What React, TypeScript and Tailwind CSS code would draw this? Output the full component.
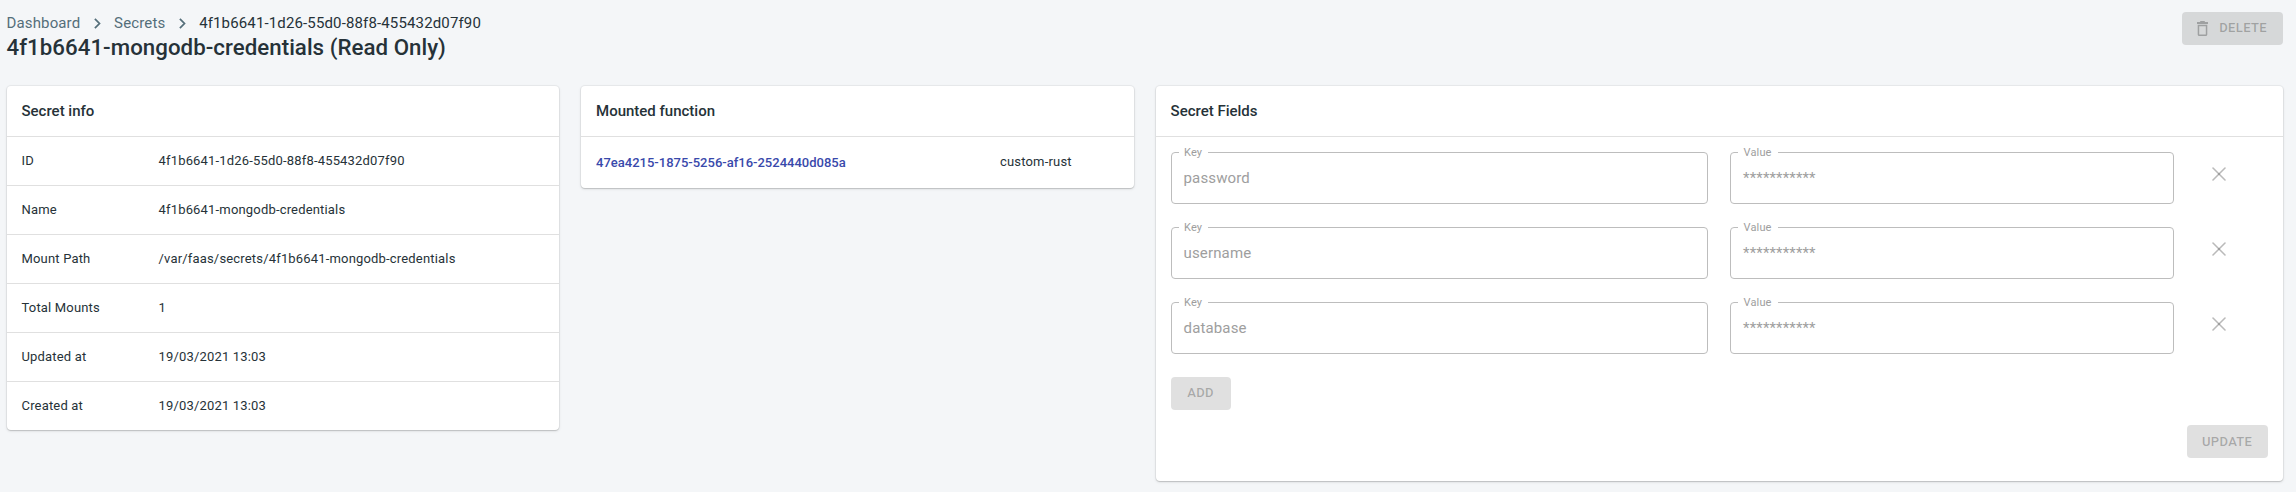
import type { ReactNode } from 'react';

const info = [
  ['ID', '4f1b6641-1d26-55d0-88f8-455432d07f90'],
  ['Name', '4f1b6641-mongodb-credentials'],
  ['Mount Path', '/var/faas/secrets/4f1b6641-mongodb-credentials'],
  ['Total Mounts', '1'],
  ['Updated at', '19/03/2021 13:03'],
  ['Created at', '19/03/2021 13:03'],
];

const fields = ['password', 'username', 'database'];

function Card({ title, className = '', children }: { title: string; className?: string; children: ReactNode }) {
  return (
    <section
      className={`rounded-[4px] bg-white shadow-[0_0_0_1px_rgba(63,63,68,0.05),0_1px_3px_0_rgba(63,63,68,0.15),0_1px_1px_0_rgba(0,0,0,0.12)] ${className}`}
    >
      <h2 className="h-[50px] pl-[15px] text-[15px] leading-[50px] font-medium">{title}</h2>
      {children}
    </section>
  );
}

function Separator() {
  return (
    <svg className="mx-[7.4px] size-[19px]" viewBox="0 0 24 24" fill="none" stroke="#546e7a" strokeWidth="2.2">
      <path d="M8.7 6.2 14.5 12l-5.8 5.8" />
    </svg>
  );
}

function Field({ label, value }: { label: string; value: string }) {
  return (
    <fieldset className="h-[57px] min-w-0 rounded-[4px] border border-[#bdbdbd] pl-[7px]">
      <legend className="h-[11px] pr-[6px] pl-[5.5px] text-[11px] leading-[11px] tracking-[0.14px] text-[#9e9e9e]">{label}</legend>
      <div className="pt-[11px] pl-[5px] text-[15px] leading-[18px] tracking-[0.14px] text-[#9e9e9e]">{value}</div>
    </fieldset>
  );
}

function CloseIcon() {
  return (
    <svg className="ml-[16px] mt-[20px] size-[14px]" viewBox="0 0 14 14" fill="none" stroke="#000" strokeOpacity="0.27" strokeWidth="1.6" strokeLinecap="round">
      <path d="M1 1l12 12" />
      <path d="M13 1 1 13" />
    </svg>
  );
}

const button =
  'flex h-[33px] items-center justify-center rounded-[4px] bg-black/12 text-[13px] font-medium tracking-[0.37px] text-black/26';

export default function App() {
  return (
    <main
      className="h-[492px] bg-[#f4f6f8] pt-[12px] pr-[13.4px] pl-[6.5px] text-[#263238]"
      style={{ fontFamily: 'Roboto, "Liberation Sans", sans-serif' }}
    >
      <header className="flex h-[74px] items-start justify-between">
        <div>
          <nav className="flex h-[22px] items-center text-[15px] leading-[22px] tracking-[0.14px] text-[#546e7a]">
            <span>Dashboard</span>
            <Separator />
            <span>Secrets</span>
            <Separator />
            <span className="text-[#263238]">4f1b6641-1d26-55d0-88f8-455432d07f90</span>
          </nav>
          <h1 className="text-[22.286px] leading-[27px] font-medium tracking-[0.04px]">4f1b6641-mongodb-credentials (Read Only)</h1>
        </div>
        <button className={`${button} w-[101px] pb-[1px]`}>
          <svg className="mr-[11px] h-[15px] w-[11px]" viewBox="0 0 11 15" fill="currentColor">
            <path fillRule="evenodd" d="M3.2 0h4.600v1H11v2H0V1h3.200zM.7 3.700h9.600v9.800c0 .8-.7 1.500-1.500 1.500H2.200c-.8 0-1.500-.7-1.500-1.500zM2.200 5.200v8.300h6.600V5.200z" />
          </svg>
          DELETE
        </button>
      </header>

      <div className="grid grid-cols-4 items-start gap-[22px]">
        <Card title="Secret info">
          <dl className="text-[13px] tracking-[0.175px]">
            {info.map(([name, value]) => (
              <div key={name} className="flex h-[49px] border-t border-[#e0e0e0] pl-[15px] leading-[48px]">
                <dt className="w-[137px]">{name}</dt>
                <dd>{value}</dd>
              </div>
            ))}
          </dl>
        </Card>

        <Card title="Mounted function">
          <div className="flex h-[52px] border-t border-[#e0e0e0] pl-[15px] text-[13px]">
            <a className="w-[404px] leading-[52px] font-medium text-[#3949ab]">47ea4215-1875-5256-af16-2524440d085a</a>
            <span className="leading-[50px] tracking-[0.175px]">custom-rust</span>
          </div>
        </Card>

        <Card title="Secret Fields" className="col-span-2 h-[395px]">
          <div className="border-t border-[#e0e0e0] px-[15px] pt-[10px]">
            <div className="flex flex-col gap-[18px]">
              {fields.map((name) => (
                <div key={name} className="grid h-[57px] grid-cols-12 gap-x-[22px]">
                  <div className="col-span-6">
                    <Field label="Key" value={name} />
                  </div>
                  <div className="col-span-5">
                    <Field label="Value" value="***********" />
                  </div>
                  <CloseIcon />
                </div>
              ))}
            </div>
            <button className={`${button} mt-[23px] w-[60px] pb-[1px]`}>ADD</button>
            <div className="mt-[15px] flex justify-end">
              <button className={`${button} w-[81px]`}>UPDATE</button>
            </div>
          </div>
        </Card>
      </div>
    </main>
  );
}
